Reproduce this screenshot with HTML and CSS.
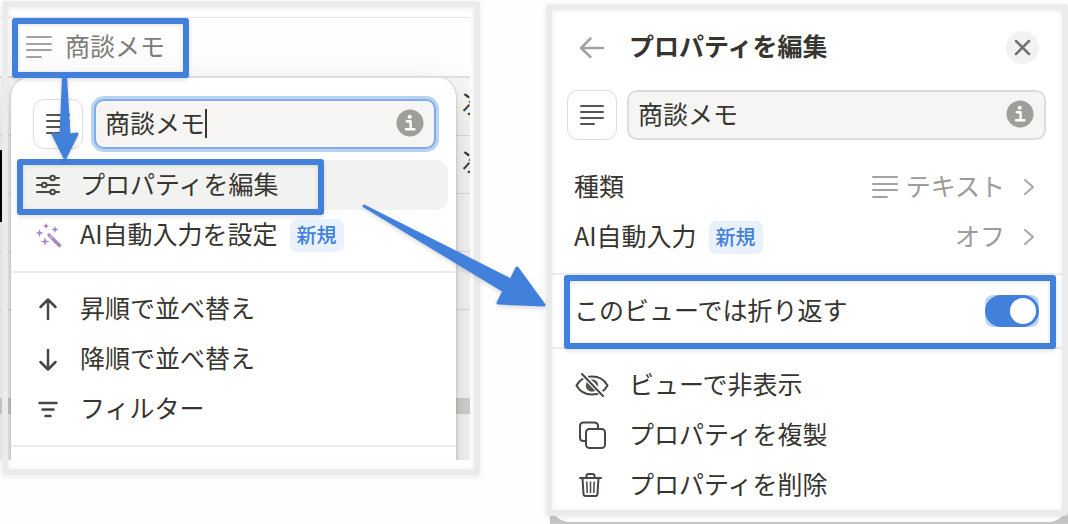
FILE: index.html
```
<!DOCTYPE html>
<html lang="ja">
    <head>
        <meta charset="utf-8">
        <title>プロパティを編集</title>
        <link rel="stylesheet" href="styles.css">
    </head>

    <body>
        <!-- shared icons -->
        <svg class="defs" width="0" height="0">
            <symbol id="icon-text" viewBox="0 0 26 24">
                <path d="M1 2H25M1 9H25M1 15H25M1 22H15"/>
            </symbol>
            <symbol id="icon-lines" viewBox="0 0 24 20">
                <path d="M1 1H23M1 7H23M1 13H23M1 19H14"/>
            </symbol>
            <symbol id="icon-info" viewBox="0 0 28 28">
                <circle cx="14" cy="14" r="13.5" fill="#9f9e99"/>
                <circle cx="13.7" cy="7.8" r="2" fill="#fff"/>
                <path d="M10.8 12.3H14.6V20M10 20.3H18.4" fill="none" stroke="#fff" stroke-width="2.4"/>
            </symbol>
            <symbol id="icon-chevron" viewBox="0 0 12 18">
                <path d="M2 2L10 9L2 16"/>
            </symbol>
        </svg>

        <main class="page">
            <section class="shot left">
                <div class="board">
                    <div class="boardTop"></div>
                    <div class="columnHead">
                        <svg class="textIcon" width="26" height="24"><use href="#icon-text"/></svg>
                        <span class="label">商談メモ</span>
                        <span class="mark"></span>
                    </div>
                    <div class="boardRow"><span class="cut">次</span></div>
                    <div class="boardRow"><span class="edge"></span><span class="cut">次</span></div>
                    <div class="boardRow"></div>
                    <div class="boardRow"></div>
                    <div class="boardRest"></div>
                    <div class="scrollbar"></div>
                    <div class="boardEnd"></div>

                    <div class="menu">
                        <div class="nameRow">
                            <button class="typeButton" aria-label="種類"><svg class="lineIcon" width="24" height="20"><use href="#icon-lines"/></svg></button>
                            <div class="field">
                                <input class="nameInput focused" type="text" value="商談メモ" aria-label="プロパティ名">
                                <span class="caret"></span>
                                <svg class="info" width="28" height="28"><use href="#icon-info"/></svg>
                            </div>
                        </div>
                        <div class="group">
                            <button class="item selected">
                                <svg class="icon" viewBox="0 0 36 36">
                                    <path d="M7 11H20M26 11H29M7 18H12M17 18H29M7 25H20M26 25H29"/>
                                    <circle cx="22.6" cy="11" r="2.3"/><circle cx="14.3" cy="18" r="2.3"/><circle cx="22.6" cy="25" r="2.3"/>
                                </svg>
                                <span class="label">プロパティを編集</span>
                                <span class="mark"></span>
                            </button>
                            <button class="item">
                                <svg class="icon magic" viewBox="0 0 36 36">
                                    <path d="M19 18L29.5 28.5" stroke="#a884c8" stroke-width="3.2"/>
                                    <path d="M19.5 18.5L22 21" stroke="#fff" stroke-width="1"/>
                                    <path fill="#a884c8" stroke="none" d="M16 6L16.900 8.100L19 9L16.900 9.900L16 12L15.100 9.900L13 9L15.100 8.100ZM25 9L26 11.500L28.500 12.500L26 13.500L25 16L24 13.500L21.500 12.500L24 11.500ZM9.500 12L10.500 15L13.500 16L10.500 17L9.500 20L8.500 17L5.500 16L8.500 15ZM15 20L16 23.500L19.500 24.500L16 25.500L15 29L14 25.500L10.500 24.500L14 23.500Z"/>
                                </svg>
                                <span class="label">AI自動入力を設定</span>
                                <span class="badge">新規</span>
                            </button>
                        </div>
                        <div class="group">
                            <button class="item"><svg class="icon bold" viewBox="0 0 36 36"><path d="M18 28V9M10.500 16L18 8.500L25.500 16"/></svg><span class="label">昇順で並べ替え</span></button>
                            <button class="item"><svg class="icon bold" viewBox="0 0 36 36"><path d="M18 9V28M10.500 21L18 28.500L25.500 21"/></svg><span class="label">降順で並べ替え</span></button>
                            <button class="item"><svg class="icon bold" viewBox="0 0 36 36"><path d="M9.500 12H26.500M12.500 18.500H23.500M15.500 25H20.500"/></svg><span class="label">フィルター</span></button>
                        </div>
                        <div class="group more"></div>
                    </div>
                </div>
                <div class="frame"></div>
            </section>

            <section class="shot right">
                <div class="backdrop">
                    <div class="editor">
                        <header class="titleRow">
                            <button class="back" aria-label="戻る"><svg class="icon gray" viewBox="0 0 36 36"><path d="M29 19H7M16.500 9.500L7 19L16.500 28"/></svg></button>
                            <h1 class="label">プロパティを編集</h1>
                            <button class="close" aria-label="閉じる"><svg width="33" height="33" viewBox="0 0 33 33"><path d="M10 10L23 23M23 10L10 23"/></svg></button>
                        </header>
                        <div class="nameRow">
                            <button class="typeButton" aria-label="種類"><svg class="lineIcon" width="24" height="20"><use href="#icon-lines"/></svg></button>
                            <div class="field">
                                <input class="nameInput" type="text" value="商談メモ" aria-label="プロパティ名">
                                <svg class="info" width="28" height="28"><use href="#icon-info"/></svg>
                            </div>
                        </div>
                        <div class="group">
                            <button class="item">
                                <span class="label">種類</span>
                                <span class="value"><svg class="textIcon" width="26" height="24"><use href="#icon-text"/></svg><span class="label">テキスト</span></span>
                                <svg class="chevron" width="12" height="18"><use href="#icon-chevron"/></svg>
                            </button>
                            <button class="item">
                                <span class="label">AI自動入力</span>
                                <span class="badge">新規</span>
                                <span class="value"><span class="label">オフ</span></span>
                                <svg class="chevron" width="12" height="18"><use href="#icon-chevron"/></svg>
                            </button>
                        </div>
                        <div class="group">
                            <div class="item">
                                <label class="label" for="wrap">このビューでは折り返す</label>
                                <span class="toggle"><input type="checkbox" id="wrap" checked></span>
                                <span class="mark"></span>
                            </div>
                        </div>
                        <div class="group">
                            <button class="item">
                                <svg class="icon" viewBox="0 0 36 36">
                                    <path d="M2.500 18.500C9 6.500 27 6.500 33.500 18.500C27 30.500 9 30.500 2.500 18.500Z" />
                                    <circle cx="18" cy="18.500" r="6.200" fill="#55544f" stroke="none"/>
                                    <path d="M18.500 15.500A3 3 0 0 1 21 18" stroke="#fff" stroke-width="1.500"/>
                                    <path d="M9 8L30.500 29.500" stroke="#fff" stroke-width="5"/>
                                    <path d="M8 7L29 29"/>
                                </svg>
                                <span class="label">ビューで非表示</span>
                            </button>
                            <button class="item">
                                <svg class="icon" viewBox="0 0 36 36">
                                    <path d="M11 24H9.500Q6 24 6 20.500V9Q6 5.500 9.500 5.500H20Q24 5.500 24 9V11"/>
                                    <rect x="12" y="12" width="19" height="19" rx="3.500"/>
                                </svg>
                                <span class="label">プロパティを複製</span>
                            </button>
                            <button class="item">
                                <svg class="icon" viewBox="0 0 36 36">
                                    <path d="M6 11H27M12.500 11V9Q12.500 7 14.500 7H18.500Q20.500 7 20.500 9V11M8.500 11L9.500 27Q9.600 29 11.600 29H21.400Q23.400 29 23.500 27L24.500 11"/>
                                    <path d="M12.800 15L13.200 25.500M16.500 15V25.500M20.200 15L19.800 25.500" stroke-width="1.500"/>
                                </svg>
                                <span class="label">プロパティを削除</span>
                            </button>
                        </div>
                    </div>
                </div>
                <div class="frame"></div>
            </section>
        </main>

        <!-- arrows drawn over both panels -->
        <svg class="arrows" width="560" height="320" viewBox="0 0 560 320">
            <path d="M63.500 76H65.500L69 135L77 134L65 158L53 134L61 135Z"/>
            <path d="M364 206L511 280L517 268L544 305L498 303L504 291Z"/>
        </svg>
    </body>
</html>
```
FILE: styles.css
```
* {
    box-sizing: border-box;
}
body {
    margin: 0;
    background: #fefefe;
    color: #373530;
    font-family: "Noto Sans CJK JP", sans-serif;
    font-size: 25px;
    line-height: 44px;
    position: relative;
}
button, input {
    font: inherit;
    color: inherit;
}
button {
    border: none;
    background: none;
    padding: 0;
    text-align: left;
}
svg {
    flex: none;
    fill: none;
    stroke-linecap: round;
    stroke-linejoin: round;
}
.defs {
    position: absolute;
}
.page {
    display: grid;
    grid-template-columns: 480fr 522fr;
    gap: 66px;
}
.shot {
    position: relative;
}
.left {
    padding-right: 10px;
    align-self: start;
}
.right {
    padding: 4px 0 0 4px;
}
.label {
    padding-bottom: 4px;
}

/* highlight frames and boxes */
.frame {
    position: absolute;
    z-index: 4;
    border: 6px solid #ebebeb;
    border-radius: 4px;
    box-shadow: 0 2px 6px rgba(0, 0, 0, 0.08), inset 0 1px 5px rgba(0, 0, 0, 0.08);
    pointer-events: none;
}
.left .frame {
    inset: 1px 0 -15px 2px;
}
.right .frame {
    inset: 4px 0 8px 0;
}
.mark {
    position: absolute;
    border: 6px solid #4181dc;
    border-radius: 3px;
    box-shadow: 0 2px 5px rgba(0, 0, 0, 0.12), inset 0 1px 4px rgba(0, 0, 0, 0.12);
    pointer-events: none;
}
.arrows {
    position: absolute;
    z-index: 10;
    top: 0;
    left: 0;
    fill: #4181dc;
    stroke: #4181dc;
    stroke-width: 3;
    filter: drop-shadow(0 2px 2px rgba(0, 0, 0, 0.15));
    pointer-events: none;
}

/* table behind the menu */
.board {
    position: relative;
    overflow: hidden;
}
.boardTop {
    height: 18px;
    border-bottom: 1px solid #e6e6e5;
}
.columnHead {
    position: relative;
    z-index: 3;
    display: flex;
    align-items: center;
    gap: 13px;
    height: 60px;
    padding-left: 26px;
    color: #7d7c78;
    border-bottom: 2px solid #e0e0df;
}
.columnHead .mark {
    inset: 0 281px -2px 12px;
}
.boardRow {
    display: flex;
    justify-content: space-between;
    height: 58px;
    padding-top: 2px;
    background: #f8f8f8;
    border-bottom: 1px solid #dededd;
}
.edge {
    width: 2px;
    height: 72px;
    margin-top: 12px;
    background: #000;
    position: relative;
}
.cut {
    width: 8px;
    margin-left: auto;
    overflow: hidden;
    white-space: nowrap;
}
.boardRest {
    height: 88px;
    background: #f8f8f8;
}
.scrollbar {
    height: 16px;
    background: #d3d2cc;
}
.boardEnd {
    height: 46px;
    background: #f8f8f8;
}

.menu {
    position: absolute;
    top: 77px;
    left: 11px;
    right: 14px;
    z-index: 2;
    padding-top: 22px;
    background: #fff;
    border-radius: 20px;
    box-shadow: 0 0 2px rgba(0, 0, 0, 0.3), 0 6px 12px rgba(0, 0, 0, 0.06), 0 18px 48px rgba(0, 0, 0, 0.16);
}
.more {
    height: 80px;
}

/* name field */
.nameRow {
    display: flex;
    gap: 11px;
    padding: 0 20px 0 22px;
}
.typeButton {
    display: flex;
    align-items: center;
    justify-content: center;
    width: 50px;
    height: 50px;
    border: 1px solid #dededc;
    border-radius: 11px;
    background: #fff;
}
.field {
    position: relative;
    flex: 1;
}
.nameInput {
    display: block;
    width: 100%;
    height: 50px;
    padding: 0 44px 4px 9px;
    border: 2px solid #dddcda;
    border-radius: 10px;
    background: #f6f5f4;
    outline: none;
}
.nameInput.focused {
    border-color: #82ade6;
    box-shadow: 0 0 0 3px #b9d4f3;
}
.caret {
    position: absolute;
    left: 111px;
    top: 10px;
    width: 2px;
    height: 29px;
    background: #373530;
}
.info {
    position: absolute;
    right: 12px;
    top: 10px;
}

/* rows */
.group {
    padding: 11px 8px;
    border-bottom: 2px solid #ededec;
}
.item {
    position: relative;
    display: flex;
    align-items: center;
    width: 100%;
    height: 50px;
    padding-left: 11px;
    border-radius: 12px;
    white-space: nowrap;
}
.selected {
    background: #f2f2f0;
}
.selected .mark {
    inset: -1px 124px -5px -2px;
}
.menu .icon {
    margin-right: 14px;
}
.icon {
    width: 36px;
    height: 36px;
    stroke: #484742;
    stroke-width: 2;
}
.bold {
    stroke-width: 2.5;
}
.gray {
    stroke: #a3a29e;
    stroke-width: 2.5;
}
.textIcon {
    stroke: #a3a29e;
    stroke-width: 2;
}
.lineIcon {
    stroke: #55544f;
    stroke-width: 2;
}
.badge {
    margin-left: 12px;
    padding: 0 7px;
    height: 33px;
    line-height: 32px;
    border-radius: 7px;
    background: #e9f2fc;
    color: #3f80dc;
    font-size: 20px;
    font-weight: 500;
}

/* property editor */
.backdrop {
    background: #c6c6c6;
    padding-bottom: 2px;
}
.editor {
    background: #fff;
    border-radius: 0 0 20px 20px;
    padding: 18px 0 1px;
}
.titleRow {
    display: flex;
    align-items: center;
    height: 50px;
    margin-bottom: 18px;
    padding: 0 29px 0 24px;
}
.back {
    display: flex;
    margin-right: 19px;
}
h1 {
    flex: 1;
    margin: 0;
    font-size: 25px;
    font-weight: 700;
}
.close {
    display: flex;
    border-radius: 50%;
    background: #f2f2f1;
    stroke: #73726e;
    stroke-width: 2.5;
}
.editor .nameRow {
    gap: 10px;
    padding: 0 22px 0 17px;
}
.editor .group {
    padding: 11px 0;
}
.editor .nameRow + .group {
    padding-top: 22px;
}
.editor .group:last-child {
    border: none;
}
.editor .item {
    padding: 0 33px 0 24px;
}
.editor .item .icon {
    margin-right: 19px;
}
.value {
    display: flex;
    align-items: center;
    gap: 8px;
    margin-left: auto;
    margin-right: 18px;
    color: #9c9b97;
}
.chevron {
    stroke: #a9a8a4;
    stroke-width: 2;
}
.editor .item .mark {
    inset: -11px 12px -13px 14px;
}
.toggle {
    display: flex;
    margin-left: auto;
    margin-right: -4px;
    border-radius: 8px;
    background: #bcd5f5;
}
.toggle input {
    appearance: none;
    display: flex;
    justify-content: flex-end;
    align-items: center;
    width: 54px;
    height: 32px;
    margin: 0;
    padding: 3px;
    border-radius: 16px;
    background: #4181dc;
}
.toggle input::before {
    content: "";
    width: 26px;
    height: 26px;
    border-radius: 50%;
    background: #fff;
}
```
